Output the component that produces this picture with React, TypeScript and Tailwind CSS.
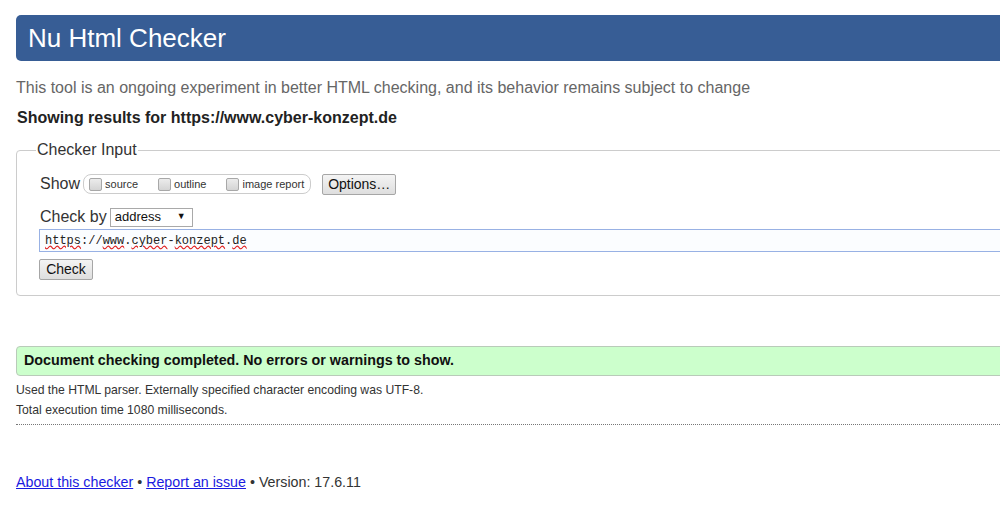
import React from 'react';

function Box() {
  return (
    <span className="inline-block w-[13px] h-[13px] rounded-[2px] border border-[#a8a8a8] bg-gradient-to-b from-[#ececec] to-[#d4d4d4]" />
  );
}

function Toggle({ label }: { label: string }) {
  return (
    <label className="flex items-center gap-[3px] text-[11px] text-[#333]">
      <Box />
      <span>{label}</span>
    </label>
  );
}

const btn =
  'h-[21px] rounded-[2px] border border-[#a6a6a6] bg-gradient-to-b from-[#f4f4f4] to-[#dedede] text-[14px] leading-[19px] text-[#111]';

export default function App() {
  return (
    <div className="w-[1000px] h-[513px] overflow-hidden bg-white font-['Liberation_Sans',Arial,sans-serif] text-[#333]">
      <div className="ml-4 w-[1060px] pt-[15px]">
        <h1 className="h-[46px] rounded-[5px] bg-[#375d95] pl-3 text-[26px] leading-[46px] text-white">
          Nu Html Checker
        </h1>
        <p className="mt-[18px] text-[16px] leading-[18px] text-[#666]">
          This tool is an ongoing experiment in better HTML checking, and its behavior remains subject to change
        </p>
        <p className="mt-[12px] pl-[1px] text-[16px] font-bold leading-[18px] text-[#222]">
          Showing results for https://www.cyber-konzept.de
        </p>

        <fieldset className="mt-[14px] rounded-[4px] border border-[#ccc] pl-[23px] pt-[14px] pb-[15px]">
          <legend className="-ml-[4px] px-[1px] text-[16px] leading-[18px] text-[#333]">Checker Input</legend>

          <div className="flex h-[22px] items-center">
            <span className="text-[16px] leading-[18px]">Show</span>
            <div className="ml-[3px] flex h-[20px] items-center gap-[20px] rounded-[8px] border border-[#ccc] pl-[5px] pr-[6px]">
              <Toggle label="source" />
              <Toggle label="outline" />
              <Toggle label="image report" />
            </div>
            <button className={`${btn} ml-[11px] w-[74px]`}>Options…</button>
          </div>

          <div className="mt-[12px] flex h-[20px] items-center">
            <span className="text-[16px] leading-[18px]">Check by</span>
            <div className="ml-[3px] flex h-[19px] w-[83px] items-center justify-between border border-[#a9a9a9] bg-white pl-[4px] pr-[6px] text-[13px] text-[#111]">
              <span>address</span>
              <span className="text-[9px]">▼</span>
            </div>
          </div>

          <div className="-ml-[1px] mt-[2px] flex h-[23px] items-center border border-[#98b1e4] bg-[#fbfdff] pl-[5px] font-['Liberation_Mono',Consolas,monospace] text-[12px] text-[#222]">
            <span className="underline decoration-wavy decoration-[#e02020]">https</span>://
            <span className="underline decoration-wavy decoration-[#e02020]">www</span>.
            <span className="underline decoration-wavy decoration-[#e02020]">cyber</span>-
            <span className="underline decoration-wavy decoration-[#e02020]">konzept</span>.
            <span className="underline decoration-wavy decoration-[#e02020]">de</span>
          </div>

          <button className={`${btn} -ml-[1px] mt-[7px] block w-[54px]`}>Check</button>
        </fieldset>

        <div className="mt-[50px] flex h-[30px] items-center rounded-l-[4px] border border-[#b9cbb9] bg-[#ccffcc] pl-[7px] text-[14.3px] font-bold text-[#111]">
          Document checking completed. No errors or warnings to show.
        </div>
        <p className="mt-[4px] text-[12.2px] leading-[20px] text-[#333]">
          Used the HTML parser. Externally specified character encoding was UTF-8.
        </p>
        <p className="text-[12.2px] leading-[20px] text-[#333]">Total execution time 1080 milliseconds.</p>
        <div className="mt-[4px] border-t border-dotted border-[#777]" />

        <p className="mt-[48px] text-[14.25px] leading-[18px] text-[#333]">
          <a href="#" className="text-[#1a1ae0] underline">About this checker</a>
          {' • '}
          <a href="#" className="text-[#1a1ae0] underline">Report an issue</a>
          {' • Version: 17.6.11'}
        </p>
      </div>
    </div>
  );
}
